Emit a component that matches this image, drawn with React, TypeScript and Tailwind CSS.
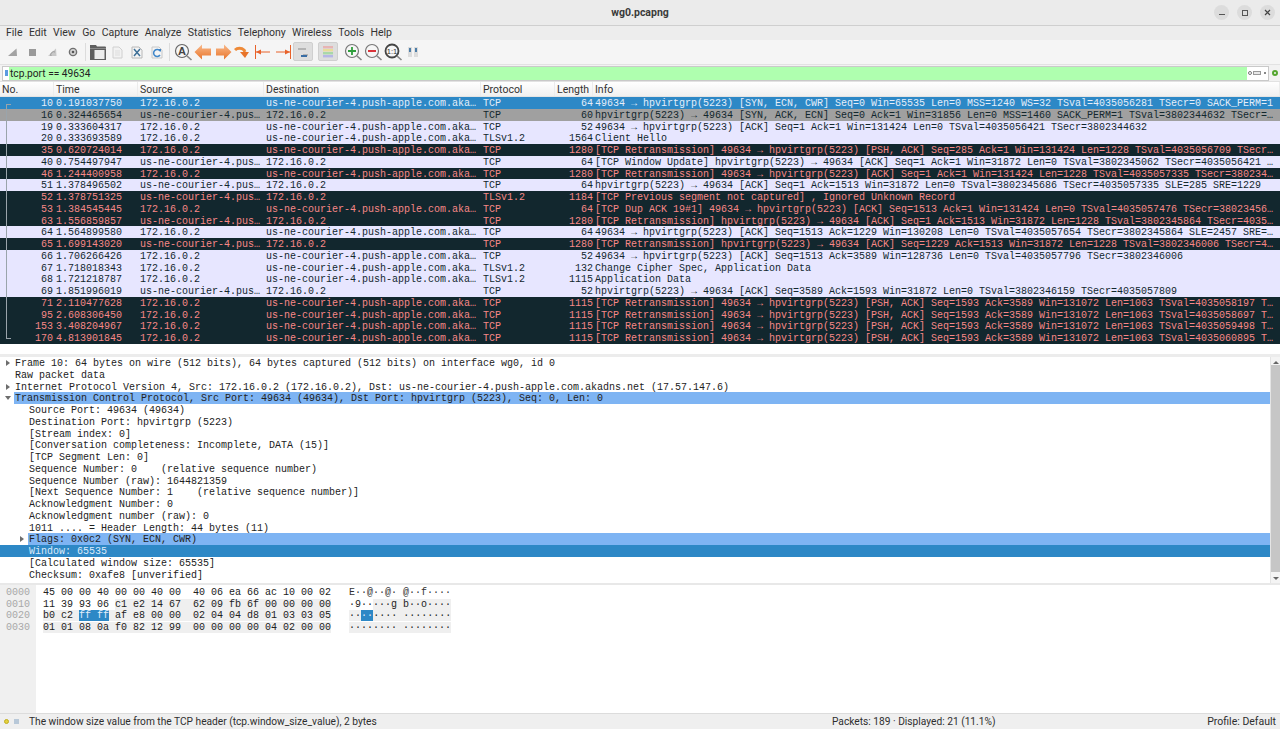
import type { ReactNode } from "react";

type RowKind = "sel" | "gray" | "norm" | "bad";

const DST = "us-ne-courier-4.push-apple.com.aka…";
const SRV = "us-ne-courier-4.pus…";
const ME = "172.16.0.2";

const packets: [RowKind, string, string, string, string, string, string, string][] = [
  ["sel", "10", "0.191037750", ME, DST, "TCP", "64", "49634 → hpvirtgrp(5223) [SYN, ECN, CWR] Seq=0 Win=65535 Len=0 MSS=1240 WS=32 TSval=4035056281 TSecr=0 SACK_PERM=1"],
  ["gray", "16", "0.324465654", SRV, ME, "TCP", "60", "hpvirtgrp(5223) → 49634 [SYN, ACK, ECN] Seq=0 Ack=1 Win=31856 Len=0 MSS=1460 SACK_PERM=1 TSval=3802344632 TSecr=…"],
  ["norm", "19", "0.333604317", ME, DST, "TCP", "52", "49634 → hpvirtgrp(5223) [ACK] Seq=1 Ack=1 Win=131424 Len=0 TSval=4035056421 TSecr=3802344632"],
  ["norm", "20", "0.333693589", ME, DST, "TLSv1.2", "1564", "Client Hello"],
  ["bad", "35", "0.620724014", ME, DST, "TCP", "1280", "[TCP Retransmission] 49634 → hpvirtgrp(5223) [PSH, ACK] Seq=285 Ack=1 Win=131424 Len=1228 TSval=4035056709 TSecr…"],
  ["norm", "40", "0.754497947", SRV, ME, "TCP", "64", "[TCP Window Update] hpvirtgrp(5223) → 49634 [ACK] Seq=1 Ack=1 Win=31872 Len=0 TSval=3802345062 TSecr=4035056421 …"],
  ["bad", "46", "1.244400958", ME, DST, "TCP", "1280", "[TCP Retransmission] 49634 → hpvirtgrp(5223) [ACK] Seq=1 Ack=1 Win=131424 Len=1228 TSval=4035057335 TSecr=380234…"],
  ["norm", "51", "1.378496502", SRV, ME, "TCP", "64", "hpvirtgrp(5223) → 49634 [ACK] Seq=1 Ack=1513 Win=31872 Len=0 TSval=3802345686 TSecr=4035057335 SLE=285 SRE=1229"],
  ["bad", "52", "1.378751325", SRV, ME, "TLSv1.2", "1184", "[TCP Previous segment not captured] , Ignored Unknown Record"],
  ["bad", "53", "1.384545445", ME, DST, "TCP", "64", "[TCP Dup ACK 19#1] 49634 → hpvirtgrp(5223) [ACK] Seq=1513 Ack=1 Win=131424 Len=0 TSval=4035057476 TSecr=38023456…"],
  ["bad", "63", "1.556859857", SRV, ME, "TCP", "1280", "[TCP Retransmission] hpvirtgrp(5223) → 49634 [ACK] Seq=1 Ack=1513 Win=31872 Len=1228 TSval=3802345864 TSecr=4035…"],
  ["norm", "64", "1.564899580", ME, DST, "TCP", "64", "49634 → hpvirtgrp(5223) [ACK] Seq=1513 Ack=1229 Win=130208 Len=0 TSval=4035057654 TSecr=3802345864 SLE=2457 SRE=…"],
  ["bad", "65", "1.699143020", SRV, ME, "TCP", "1280", "[TCP Retransmission] hpvirtgrp(5223) → 49634 [ACK] Seq=1229 Ack=1513 Win=31872 Len=1228 TSval=3802346006 TSecr=4…"],
  ["norm", "66", "1.706266426", ME, DST, "TCP", "52", "49634 → hpvirtgrp(5223) [ACK] Seq=1513 Ack=3589 Win=128736 Len=0 TSval=4035057796 TSecr=3802346006"],
  ["norm", "67", "1.718018343", ME, DST, "TLSv1.2", "132", "Change Cipher Spec, Application Data"],
  ["norm", "68", "1.721218787", ME, DST, "TLSv1.2", "1115", "Application Data"],
  ["norm", "69", "1.851996019", SRV, ME, "TCP", "52", "hpvirtgrp(5223) → 49634 [ACK] Seq=3589 Ack=1593 Win=31872 Len=0 TSval=3802346159 TSecr=4035057809"],
  ["bad", "71", "2.110477628", ME, DST, "TCP", "1115", "[TCP Retransmission] 49634 → hpvirtgrp(5223) [PSH, ACK] Seq=1593 Ack=3589 Win=131072 Len=1063 TSval=4035058197 T…"],
  ["bad", "95", "2.608306450", ME, DST, "TCP", "1115", "[TCP Retransmission] 49634 → hpvirtgrp(5223) [PSH, ACK] Seq=1593 Ack=3589 Win=131072 Len=1063 TSval=4035058697 T…"],
  ["bad", "153", "3.408204967", ME, DST, "TCP", "1115", "[TCP Retransmission] 49634 → hpvirtgrp(5223) [PSH, ACK] Seq=1593 Ack=3589 Win=131072 Len=1063 TSval=4035059498 T…"],
  ["bad", "170", "4.813901845", ME, DST, "TCP", "1115", "[TCP Retransmission] 49634 → hpvirtgrp(5223) [PSH, ACK] Seq=1593 Ack=3589 Win=131072 Len=1063 TSval=4035060895 T…"],
];

const rowClass: Record<RowKind, string> = {
  sel: "bg-[#2d88c6] text-[#e4eefa]",
  gray: "bg-[#a0a0a0] text-[#12272e]",
  norm: "bg-[#e7e6ff] text-[#12272e]",
  bad: "bg-[#12272e] text-[#f78787]",
};

const details: { text: string; indent: 0 | 1; arrow?: "right" | "down"; hl?: "tree" | "flags" | "sel" }[] = [
  { text: "Frame 10: 64 bytes on wire (512 bits), 64 bytes captured (512 bits) on interface wg0, id 0", indent: 0, arrow: "right" },
  { text: "Raw packet data", indent: 0 },
  { text: "Internet Protocol Version 4, Src: 172.16.0.2 (172.16.0.2), Dst: us-ne-courier-4.push-apple.com.akadns.net (17.57.147.6)", indent: 0, arrow: "right" },
  { text: "Transmission Control Protocol, Src Port: 49634 (49634), Dst Port: hpvirtgrp (5223), Seq: 0, Len: 0", indent: 0, arrow: "down", hl: "tree" },
  { text: "Source Port: 49634 (49634)", indent: 1 },
  { text: "Destination Port: hpvirtgrp (5223)", indent: 1 },
  { text: "[Stream index: 0]", indent: 1 },
  { text: "[Conversation completeness: Incomplete, DATA (15)]", indent: 1 },
  { text: "[TCP Segment Len: 0]", indent: 1 },
  { text: "Sequence Number: 0    (relative sequence number)", indent: 1 },
  { text: "Sequence Number (raw): 1644821359", indent: 1 },
  { text: "[Next Sequence Number: 1    (relative sequence number)]", indent: 1 },
  { text: "Acknowledgment Number: 0", indent: 1 },
  { text: "Acknowledgment number (raw): 0", indent: 1 },
  { text: "1011 .... = Header Length: 44 bytes (11)", indent: 1 },
  { text: "Flags: 0x0c2 (SYN, ECN, CWR)", indent: 1, arrow: "right", hl: "flags" },
  { text: "Window: 65535", indent: 1, hl: "sel" },
  { text: "[Calculated window size: 65535]", indent: 1 },
  { text: "Checksum: 0xafe8 [unverified]", indent: 1 },
];

const menus = ["File", "Edit", "View", "Go", "Capture", "Analyze", "Statistics", "Telephony", "Wireless", "Tools", "Help"];

function Ico({ w = 18, children }: { w?: number; children: ReactNode }) {
  return (
    <svg width={w} height="18" viewBox={`0 0 ${w} 18`} className="shrink-0">
      {children}
    </svg>
  );
}

function Lens({ color = "#777", sw = 1.2, children }: { color?: string; sw?: number; children?: ReactNode }) {
  return (
    <Ico w={20}>
      <circle cx="9" cy="8" r="6.5" fill="#f6f6f6" stroke={color} strokeWidth={sw} />
      <path d="M14 13 L18.5 17" stroke="#888" strokeWidth="1.6" />
      {children}
    </Ico>
  );
}

function Sep() {
  return <div className="w-px h-[18px] bg-[#dcdcdc] shrink-0" />;
}

function Toolbar() {
  return (
    <div className="h-[24px] bg-[#f5f5f5] flex items-center pl-[4px] pb-[1px] shrink-0">
      <div className="w-[18px]">
        <Ico><path d="M4 13 L12.5 5.5 L13 13Z" fill="#a3a3a3" /></Ico>
      </div>
      <div className="w-[18px] ml-[2px]">
        <Ico><rect x="5" y="6" width="7" height="7" fill="#9a9a9a" /></Ico>
      </div>
      <div className="w-[18px] ml-[2px]">
        <Ico><path d="M4 13 L12 5.5 L12.5 13Z" fill="#c8c8c8" /><path d="M7 13 a3 3 0 0 1 4 -4" stroke="#999" fill="none" /></Ico>
      </div>
      <div className="w-[18px] ml-[2px]">
        <Ico>
          <circle cx="9" cy="9" r="3.6" fill="#d5d5d5" stroke="#6f6f6f" strokeWidth="1.4" />
          <circle cx="9" cy="9" r="1.3" fill="#555" />
        </Ico>
      </div>
      <div className="ml-[3px]"><Sep /></div>
      <div className="ml-[2px] w-[20px]">
        <Ico w={20}>
          <path d="M2 2 h6 l1 1.5 h8 a1 1 0 0 1 1 1 V17 H2Z" fill="#5f5f5f" />
          <rect x="6.5" y="7" width="10" height="9" fill="#ededed" />
          <rect x="2" y="5" width="16" height="1" fill="#8a8a8a" />
        </Ico>
      </div>
      <div className="w-[18px]">
        <Ico><path d="M5 4 h6 l3 3 v8 H5Z" fill="#f2f2f2" stroke="#d0d0d0" /><path d="M7 8 h5 M7 10 h5 M7 12 h5" stroke="#ddd" /></Ico>
      </div>
      <div className="ml-[2px] w-[18px]">
        <Ico>
          <path d="M4 4 h7 l3 3 v8 H4Z" fill="#f4f4f4" stroke="#b8b8b8" />
          <path d="M6 6 L12 13 M12 6 L6 13" stroke="#3d6f96" strokeWidth="1.5" />
        </Ico>
      </div>
      <div className="ml-[2px] w-[18px]">
        <Ico>
          <path d="M4 4 h7 l3 3 v8 H4Z" fill="#f4f4f4" stroke="#c8c8c8" />
          <path d="M12 8 a3.5 3.5 0 1 0 0 4" stroke="#3f86c9" strokeWidth="1.5" fill="none" />
          <path d="M10 6 L13 6 L13 9Z" fill="#3f86c9" />
        </Ico>
      </div>
      <div className="ml-[3px]"><Sep /></div>
      <div className="ml-[3px] w-[20px]">
        <Lens color="#666">
          <text x="9" y="12" textAnchor="middle" fontSize="11" fontWeight="700" fontFamily="Liberation Sans" fill="#444">A</text>
        </Lens>
      </div>
      <div className="w-[20px]">
        <Ico w={20}>
          <defs>
            <linearGradient id="orange" x1="0" y1="0" x2="0" y2="1">
              <stop offset="0" stopColor="#f9b98a" />
              <stop offset="1" stopColor="#e8742a" />
            </linearGradient>
          </defs>
          <path d="M1.5 9 L9 1.5 V5.5 H18 V12.5 H9 V16.5Z" fill="url(#orange)" />
        </Ico>
      </div>
      <div className="w-[20px]">
        <Ico w={20}><path d="M18.5 9 L11 1.5 V5.5 H3 V12.5 H11 V16.5Z" fill="url(#orange)" /></Ico>
      </div>
      <div className="w-[18px]">
        <Ico>
          <path d="M2 7 a6 5 0 0 1 9 0 l1 2" stroke="#ee8a38" strokeWidth="3" fill="none" />
          <path d="M7 9 H16 L12 15Z" fill="#e8742a" />
        </Ico>
      </div>
      <div className="w-[20px] ml-[2px]">
        <Ico w={20}>
          <path d="M2.5 2 V16" stroke="#e8622a" strokeWidth="1" />
          <path d="M3 9 H17" stroke="#e8622a" strokeWidth="1" />
          <path d="M3 9 L8 6.5 V11.5Z" fill="#e8622a" />
        </Ico>
      </div>
      <div className="w-[20px]">
        <Ico w={20}>
          <path d="M17.5 2 V16" stroke="#e8622a" strokeWidth="1" />
          <path d="M3 9 H17" stroke="#e8622a" strokeWidth="1" />
          <path d="M17 9 L12 6.5 V11.5Z" fill="#e8622a" />
        </Ico>
      </div>
      <div className="w-[20px] h-[19px] bg-[#dedede] border border-[#cfcfcf] rounded-[2px] flex items-center justify-center">
        <Ico w={16}>
          <path d="M3 6 H11 M8 12 H13" stroke="#8a8a8a" strokeWidth="1" />
          <rect x="6" y="12" width="6" height="2" fill="#3a6ea5" />
        </Ico>
      </div>
      <div className="ml-[5px] w-[20px] h-[19px] bg-[#dedede] border border-[#cfcfcf] rounded-[2px] flex items-center justify-center">
        <Ico w={12}>
          <rect x="1" y="3" width="10" height="2.4" fill="#e7b4b4" />
          <rect x="1" y="6" width="10" height="2.4" fill="#e8dd9a" />
          <rect x="1" y="9" width="10" height="2.4" fill="#a9d8a9" />
          <rect x="1" y="12" width="10" height="2.4" fill="#b6b6e6" />
        </Ico>
      </div>
      <div className="ml-[5px] w-[20px]">
        <Lens><path d="M5 8 H13 M9 4 V12" stroke="#2e9e3b" strokeWidth="1.8" /></Lens>
      </div>
      <div className="w-[20px]">
        <Lens><path d="M5 8 H13" stroke="#d9343a" strokeWidth="2" /></Lens>
      </div>
      <div className="w-[20px]">
        <Lens color="#444" sw={1.8}>
          <text x="9" y="11" textAnchor="middle" fontSize="7.5" fontFamily="Liberation Sans" fill="#333">1:1</text>
        </Lens>
      </div>
      <div className="w-[20px] flex justify-center">
        <Ico w={12}>
          <rect x="1" y="4" width="4" height="10" fill="#dcdcdc" />
          <rect x="7" y="4" width="4" height="10" fill="#dcdcdc" />
          <rect x="2" y="5" width="2" height="4" fill="#4d7ea8" />
          <rect x="8" y="5" width="2" height="4" fill="#4d7ea8" />
        </Ico>
      </div>
    </div>
  );
}

function FilterBar() {
  return (
    <div className="h-[18px] bg-[#f2f2f2] flex items-center pl-[2px] pr-[2px] border-t border-b border-[#e2e2e2] shrink-0">
      <div className="flex-1 h-[15px] flex items-stretch border border-[#c9c9c9] bg-white">
        <div className="w-[6px] flex items-center justify-center">
          <div className="w-[3px] h-[6px] bg-[#5b9be0]" />
        </div>
        <div className="flex-1 bg-[#afffaf] pl-[1px] text-[10.2px] leading-[13px] text-[#222]">tcp.port == 49634</div>
        <div className="w-[21px] flex items-center gap-[1px] pl-[1px]">
          <div className="w-[4px] h-[4px] rounded-full border border-[#777]" />
          <div className="w-[8px] h-[4px] border border-[#999] bg-[#e8e8e8]" />
          <div className="w-[2px] h-[2px] ml-[2px] bg-[#888]" />
        </div>
      </div>
      <div className="ml-[3px] w-[6px] h-[6px] rounded-full border-2 border-[#55a630]" />
    </div>
  );
}

function HeaderCell({ className, children }: { className: string; children?: ReactNode }) {
  return <div className={`${className} pl-[2px] border-r border-[#ececec] h-full leading-[15px]`}>{children}</div>;
}

function PacketList() {
  return (
    <>
      <div className="h-[15px] flex text-[10.5px] text-[#333] bg-gradient-to-b from-[#ffffff] to-[#f0f0f0] border-b border-[#e4e4e4] shrink-0">
        <HeaderCell className="w-[54px]">No.</HeaderCell>
        <HeaderCell className="w-[84px]">Time</HeaderCell>
        <HeaderCell className="w-[126px]">Source</HeaderCell>
        <HeaderCell className="w-[217px]">Destination</HeaderCell>
        <HeaderCell className="w-[74px]">Protocol</HeaderCell>
        <HeaderCell className="w-[38px]">Length</HeaderCell>
        <HeaderCell className="flex-1">Info</HeaderCell>
      </div>
      <div className="relative h-[247px] shrink-0 font-['Liberation_Mono',monospace] text-[10px] whitespace-pre overflow-hidden">
        {packets.map(([kind, no, time, src, dst, proto, len, info]) => (
          <div key={no} className={`flex h-[11.76px] leading-[13px] ${rowClass[kind]}`}>
            <div className="w-[54px] pr-[1px] text-right">{no}</div>
            <div className="w-[84px] pl-[2px]">{time}</div>
            <div className="w-[126px] pl-[2px]">{src}</div>
            <div className="w-[217px] pl-[2px]">{dst}</div>
            <div className="w-[74px] pl-[2px]">{proto}</div>
            <div className="w-[38px] text-right">{len}</div>
            <div className="flex-1 pl-[2px]">{info}</div>
          </div>
        ))}
        {/* related packet bracket on the left of the No. column */}
        <div className="absolute left-[6px] top-[7px] bottom-[5px] w-[5px] border-l border-t border-b border-[#9aa4ab]" />
      </div>
      <div className="h-[10px] bg-white shrink-0" />
      <div className="h-[3px] bg-[#ececec] shrink-0" />
    </>
  );
}

function Arrow({ dir, x }: { dir: "right" | "down"; x: string }) {
  return (
    <svg width="6" height="6" viewBox="0 0 6 6" className={`absolute top-[3px] ${x}`}>
      {dir === "right" ? <path d="M1 0 L5 3 L1 6Z" fill="#6d6d6d" /> : <path d="M0 1 L6 1 L3 5Z" fill="#6d6d6d" />}
    </svg>
  );
}

function DetailTree() {
  return (
    <div className="h-[226px] flex shrink-0 bg-white overflow-hidden">
      <div className="flex-1 font-['Liberation_Mono',monospace] text-[10px] text-[#222] whitespace-pre">
        {details.map((d) => (
          <div key={d.text} className={`relative h-[11.78px] leading-[14px] ${d.hl === "sel" ? "bg-[#2d88c6]" : ""}`}>
            {d.arrow && <Arrow dir={d.arrow} x={d.indent === 0 ? "left-[5px]" : "left-[19px]"} />}
            <div
              className={`h-full ${d.indent === 0 ? "ml-[14px] pl-[1px]" : "ml-[28px] pl-[1px]"} ${
                d.hl === "tree" || d.hl === "flags" ? "bg-[#7eb4f3]" : ""
              } ${d.hl === "sel" ? "text-[#dcebfa]" : ""}`}
            >
              {d.text}
            </div>
          </div>
        ))}
      </div>
      <div className="w-[10px] bg-[#f4f4f4] flex flex-col items-center border-l border-[#e4e4e4]">
        <div className="h-[7px] flex items-center pt-[3px]">
          <div className="border-x-[3px] border-x-transparent border-b-[3px] border-b-[#666]" />
        </div>
        <div className="flex-1 w-full bg-[#c6c6c6] my-[1px]" />
        <div className="h-[10px] flex items-center">
          <div className="border-x-[3px] border-x-transparent border-t-[3px] border-t-[#666]" />
        </div>
      </div>
    </div>
  );
}

const shade = "bg-[#efefef]";

function HexDump() {
  return (
    <div className="h-[130px] flex shrink-0 bg-white border-t-2 border-[#e8e8e8] font-['Liberation_Mono',monospace] text-[10px] text-[#222] whitespace-pre">
      <div className="w-[36px] bg-[#f0f0f0] pl-[6px] text-[#a8a8a8] leading-[11.7px] pt-[2px]">
        <div>0000</div>
        <div>0010</div>
        <div>0020</div>
        <div>0030</div>
      </div>
      <div className="pl-[7px] leading-[11.7px] pt-[2px]">
        <div>
          {"45 00 00 40 00 00 40 00  40 06 ea 66 ac 10 00 02   "}
          <span className="text-[#333]">{"E··@··@· @··f····"}</span>
        </div>
        <div>
          {"11 39 93 06 "}
          <span className={shade}>{"c1 e2 14 67  62 09 fb 6f 00 00 00 00"}</span>
          {"   ·9··"}
          <span className={shade}>{"···g b··o····"}</span>
        </div>
        <div>
          <span className={shade}>{"b0 c2 "}</span>
          <span className="bg-[#2d88c6] text-[#e4eefa]">{"ff ff"}</span>
          <span className={shade}>{" af e8 00 00  02 04 04 d8 01 03 03 05"}</span>
          {"   "}
          <span className={shade}>{"··"}</span>
          <span className="bg-[#2d88c6] text-[#e4eefa]">{"··"}</span>
          <span className={shade}>{"···· ········"}</span>
        </div>
        <div>
          <span className={shade}>{"01 01 08 0a f0 82 12 99  00 00 00 00 04 02 00 00"}</span>
          {"   "}
          <span className={shade}>{"········ ········"}</span>
        </div>
      </div>
    </div>
  );
}

function StatusBar() {
  return (
    <div className="flex-1 bg-[#efefef] border-t border-[#dcdcdc] flex items-center text-[10.2px] text-[#2e2e2e] whitespace-pre">
      <div className="w-[832px] flex items-center">
        <div className="ml-[4px] w-[5px] h-[5px] rounded-full bg-[#e5d13c] border border-[#c0ae20]" />
        <div className="ml-[5px] w-[5px] h-[5px] bg-[#b8c8d8]" />
        <div className="ml-[10px]">The window size value from the TCP header (tcp.window_size_value), 2 bytes</div>
      </div>
      <div>Packets: 189 · Displayed: 21 (11.1%)</div>
      <div className="ml-auto pr-[4px] text-[10.5px]">Profile: Default</div>
    </div>
  );
}

export default function App() {
  return (
    <div className="w-[1280px] h-[729px] overflow-hidden flex flex-col bg-white font-['Roboto',sans-serif]">
      <div className="h-[26px] bg-[#ebebeb] border-b border-[#cfcfcf] flex items-center justify-center relative shrink-0">
        <span className="text-[10.5px] font-bold text-[#3a3a3a]">wg0.pcapng</span>
        <div className="absolute right-[5px] top-[5px] flex gap-[8px]">
          <div className="w-[15px] h-[15px] rounded-full bg-[#dcdcdc] flex items-center justify-center">
            <div className="w-[6px] h-px bg-[#555] mt-[3px]" />
          </div>
          <div className="w-[15px] h-[15px] rounded-full bg-[#dcdcdc] flex items-center justify-center">
            <div className="w-[6px] h-[6px] border border-[#555]" />
          </div>
          <div className="w-[15px] h-[15px] rounded-full bg-[#dcdcdc] flex items-center justify-center">
            <svg width="7" height="7" viewBox="0 0 7 7"><path d="M1 1 L6 6 M6 1 L1 6" stroke="#444" strokeWidth="1.2" /></svg>
          </div>
        </div>
      </div>
      <div className="h-[14px] bg-[#ededed] flex items-center pl-[6px] gap-[6.4px] text-[10.5px] text-[#333] shrink-0">
        {menus.map((m) => (
          <span key={m}>{m}</span>
        ))}
      </div>
      <Toolbar />
      <FilterBar />
      <PacketList />
      <DetailTree />
      <HexDump />
      <StatusBar />
    </div>
  );
}
